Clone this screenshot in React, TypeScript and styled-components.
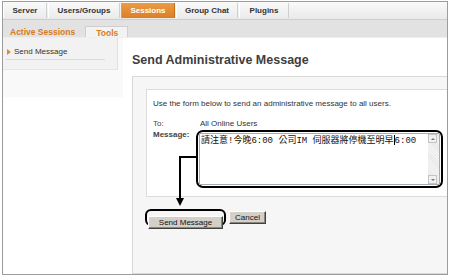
import React from "react";
import styled, { createGlobalStyle } from "styled-components";

const GlobalStyle = createGlobalStyle`
  html, body {
    margin: 0;
    padding: 0;
    background: #fff;
  }
  body {
    font-family: "Liberation Sans", Arial, sans-serif;
  }
`;

const Frame = styled.div`
  width: 444px;
  height: 272px;
  margin: 1px 0 0 2px;
  border: 1px solid #9c9c9c;
  overflow: hidden;
  display: flex;
  flex-direction: column;
  background: #fff;
`;

const NavBar = styled.div`
  height: 18px;
  box-sizing: border-box;
  border-bottom: 1px solid #cdcdcd;
  background: linear-gradient(#fafafa, #e9e9e9);
  display: flex;
  gap: 1px;
  padding-top: 1px;
  flex-shrink: 0;
`;

const NavTab = styled.div<{ $w: number; $active?: boolean }>`
  width: ${(p) => p.$w}px;
  height: 15px;
  box-sizing: border-box;
  display: flex;
  align-items: center;
  justify-content: center;
  font-size: 8px;
  font-weight: bold;
  color: ${(p) => (p.$active ? "#fff" : "#333")};
  background: ${(p) =>
    p.$active
      ? "linear-gradient(#eb9c45, #db7f24)"
      : "linear-gradient(#f9f9f9, #ebebeb)"};
  border-left: 1px solid ${(p) => (p.$active ? "#e59a4c" : "#fff")};
  border-right: 1px solid ${(p) => (p.$active ? "#c46f1c" : "#cfcfcf")};
`;

const SubBar = styled.div`
  height: 17px;
  flex-shrink: 0;
  background: #e2e2e2;
  display: flex;
  align-items: flex-end;
  padding-left: 7px;
  box-sizing: border-box;
`;

const SubTab = styled.div<{ $selected?: boolean }>`
  height: 11px;
  display: flex;
  align-items: center;
  font-size: 8.5px;
  font-weight: bold;
  color: #d67a22;
  box-sizing: border-box;
  margin-left: ${(p) => (p.$selected ? 10 : 0)}px;
  padding: ${(p) => (p.$selected ? "1px 9px 0 10px" : "0")};
  background: ${(p) => (p.$selected ? "#f3f3f3" : "transparent")};
  border: ${(p) => (p.$selected ? "1px solid #cfcfcf" : "none")};
  border-bottom: none;
`;

const Body = styled.div`
  flex: 1;
  display: flex;
  border-top: 1px solid #eeeeee;
`;

const SidebarCol = styled.div`
  flex-shrink: 0;
  width: 120px;
  height: 59px;
  background: #f9f9f9;
`;

const SideBox = styled.div`
  width: 115px;
  height: 32px;
  box-sizing: border-box;
  background: #f2f2f2;
  border-right: 1px solid #e0e0e0;
  border-bottom: 1px solid #e6e6e6;
  padding-top: 8px;
`;

const SideItem = styled.div`
  display: flex;
  align-items: center;
  margin: 0 12px 0 3px;
  padding: 0 0 2px 1px;
  border-bottom: 1px solid #d9d9d9;
  font-size: 8px;
  color: #333;
  line-height: 11px;
`;

const Bullet = styled.span`
  width: 0;
  height: 0;
  border-left: 4px solid #e08a2e;
  border-top: 3px solid transparent;
  border-bottom: 3px solid transparent;
  margin-right: 3px;
`;

const Main = styled.div`
  flex: 1;
  min-width: 0;
  display: flex;
  flex-direction: column;
  padding: 15px 0 0 9px;
`;

const Heading = styled.h1`
  margin: 0;
  font-size: 12.5px;
  line-height: 15px;
  font-weight: bold;
  color: #3e3e3e;
  white-space: nowrap;
`;

const Panel = styled.div`
  position: relative;
  flex: 1;
  width: 340px;
  flex-shrink: 0;
  margin-top: 8px;
  border: 1px solid #d9d9d9;
  background: #f6f6f6;
  padding: 12px 0 0 13px;
`;

const FormBox = styled.div`
  width: 320px;
  border: 1px solid #dcdcdc;
  background: #fff;
  padding: 9px 0 8px 6px;
  font-size: 8px;
  color: #333;
`;

const Intro = styled.div`
  line-height: 10px;
  margin-bottom: 10px;
  white-space: nowrap;
`;

const Fields = styled.div`
  display: grid;
  grid-template-columns: 43px 1fr;
  line-height: 10px;
`;

const Label = styled.div<{ $bold?: boolean }>`
  font-weight: ${(p) => (p.$bold ? "bold" : "normal")};
  color: #444;
  padding-top: ${(p) => (p.$bold ? 1 : 0)}px;
`;

const Value = styled.div`
  padding-left: 4px;
`;

const Callout = styled.div<{ $radius: number }>`
  border: 2px solid #000;
  border-radius: ${(p) => p.$radius}px;
  padding: 1px;
  box-sizing: border-box;
`;

const MessageCallout = styled(Callout)`
  width: 247px;
  height: 58px;
  margin-top: 1px;
`;

const TextBox = styled.div`
  height: 52px;
  box-sizing: border-box;
  border: 1px solid #a5acb5;
  background: #fff;
  display: flex;
`;

const TextContent = styled.div`
  flex: 1;
  padding: 1px 1px;
  font-family: "Liberation Mono", "Noto Sans CJK TC", monospace;
  font-size: 9px;
  line-height: 11px;
  color: #111;
  white-space: nowrap;
`;

const Caret = styled.span`
  display: inline-block;
  width: 0;
  height: 10px;
  border-left: 1px solid #000;
  vertical-align: -2px;
`;

const ScrollTrack = styled.div`
  width: 10px;
  display: flex;
  flex-direction: column;
  justify-content: space-between;
  background: repeating-linear-gradient(45deg, #f4f4f4 0 1px, #e9e9e9 1px 2px);
  padding: 0 1px 0 0;
`;

const ScrollButton = styled.div<{ $down?: boolean }>`
  width: 9px;
  height: 9px;
  box-sizing: border-box;
  border: 1px solid #c4c4c4;
  background: #f1f1f1;
  display: flex;
  align-items: center;
  justify-content: center;
  &::after {
    content: "";
    border-left: 2px solid transparent;
    border-right: 2px solid transparent;
    ${(p) =>
      p.$down ? "border-top: 2px solid #777;" : "border-bottom: 2px solid #777;"}
  }
`;

const ButtonRow = styled.div`
  display: flex;
  align-items: center;
  gap: 3px;
  margin: 12px 0 0 -1px;
`;

const ButtonCallout = styled(Callout)`
  width: 81px;
  height: 17px;
  padding: 0 1px;
`;

const Button = styled.button<{ $w: number }>`
  width: ${(p) => p.$w}px;
  height: 13px;
  box-sizing: border-box;
  padding: 0;
  margin: 0;
  font-family: "Liberation Sans", Arial, sans-serif;
  font-size: 8px;
  line-height: 11px;
  color: #111;
  background: #d4d0c8;
  border: 1px solid;
  border-color: #fff #404040 #404040 #fff;
  box-shadow: inset -1px -1px #8a8780;
`;

const Arrow = styled.svg`
  position: absolute;
  left: 0;
  top: 0;
  pointer-events: none;
`;

export default function App() {
  return (
    <>
      <GlobalStyle />
      <Frame>
        <NavBar>
          <NavTab $w={44}>Server</NavTab>
          <NavTab $w={72}>Users/Groups</NavTab>
          <NavTab $w={54} $active>
            Sessions
          </NavTab>
          <NavTab $w={62}>Group Chat</NavTab>
          <NavTab $w={50}>Plugins</NavTab>
        </NavBar>
        <SubBar>
          <SubTab>Active Sessions</SubTab>
          <SubTab $selected>Tools</SubTab>
        </SubBar>
        <Body>
          <SidebarCol>
            <SideBox>
              <SideItem>
                <Bullet />
                Send Message
              </SideItem>
            </SideBox>
          </SidebarCol>
          <Main>
            <Heading>Send Administrative Message</Heading>
            <Panel>
              <FormBox>
                <Intro>
                  Use the form below to send an administrative message to all
                  users.
                </Intro>
                <Fields>
                  <Label>To:</Label>
                  <Value>All Online Users</Value>
                  <Label $bold>Message:</Label>
                  <MessageCallout $radius={7}>
                    <TextBox>
                      <TextContent>
                        請注意!今晚6:00 公司IM 伺服器將停機至明早
                        <Caret />
                        6:00
                      </TextContent>
                      <ScrollTrack>
                        <ScrollButton />
                        <ScrollButton $down />
                      </ScrollTrack>
                    </TextBox>
                  </MessageCallout>
                </Fields>
              </FormBox>
              <ButtonRow>
                <ButtonCallout $radius={6}>
                  <Button $w={75}>Send Message</Button>
                </ButtonCallout>
                <Button $w={37}>Cancel</Button>
              </ButtonRow>
              <Arrow width="70" height="135" viewBox="0 0 70 135">
                <path
                  d="M64 80 H47 V122"
                  fill="none"
                  stroke="#000"
                  strokeWidth="2"
                />
                <polygon points="43,121 51,121 47,129" fill="#000" />
              </Arrow>
            </Panel>
          </Main>
        </Body>
      </Frame>
    </>
  );
}
